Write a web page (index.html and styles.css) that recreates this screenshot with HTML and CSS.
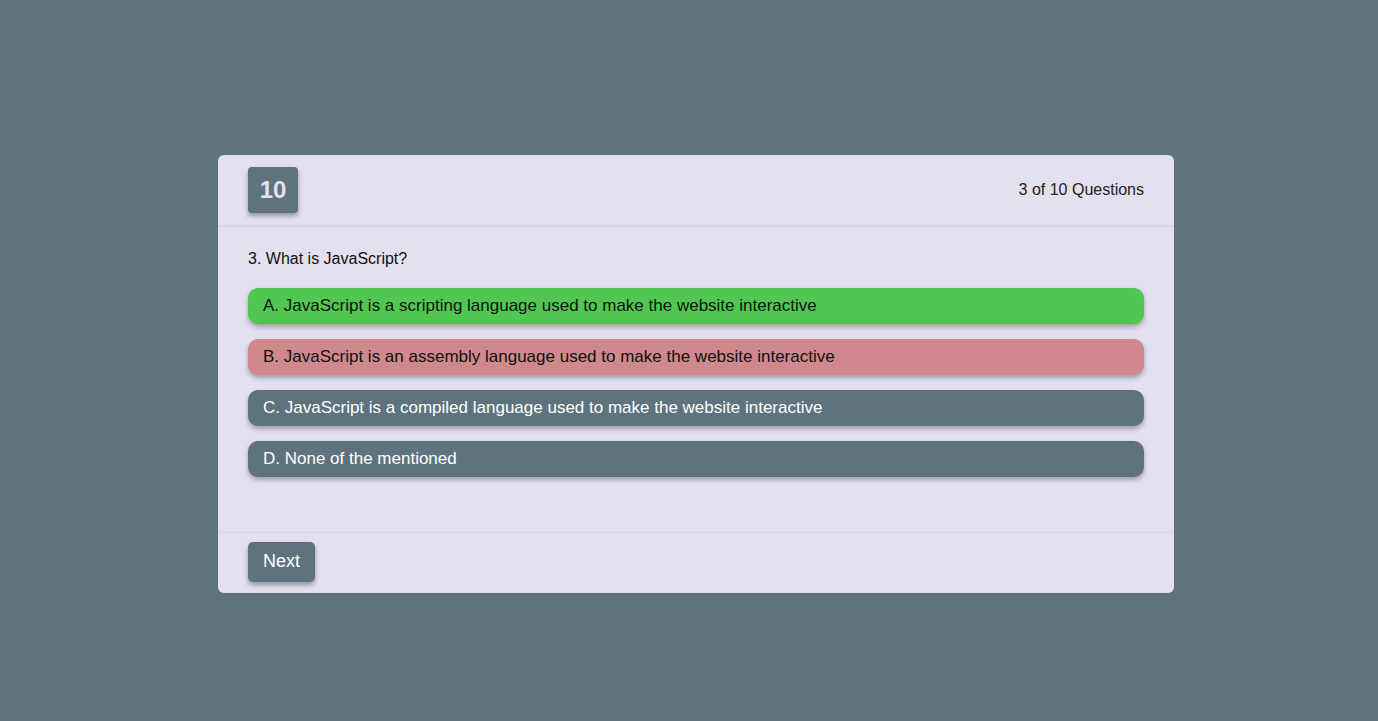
FILE: index.html
```html
<!DOCTYPE html>
<html>
<head>
<meta charset="utf-8">
<link rel="stylesheet" href="styles.css">
</head>
<body>
<div class="page">
  <div class="quiz">
    <div class="quiz-header">
      <div class="timer">10</div>
      <div class="count">3 of 10 Questions</div>
    </div>
    <div class="quiz-body">
      <div class="question">3. What is JavaScript?</div>
      <div class="options">
        <div class="option correct">A. JavaScript is a scripting language used to make the website interactive</div>
        <div class="option wrong">B. JavaScript is an assembly language used to make the website interactive</div>
        <div class="option">C. JavaScript is a compiled language used to make the website interactive</div>
        <div class="option">D. None of the mentioned</div>
      </div>
    </div>
    <div class="quiz-footer">
      <button class="next">Next</button>
    </div>
  </div>
</div>
</body>
</html>
```
FILE: styles.css
```css
* { box-sizing: border-box; }
html, body { margin: 0; height: 100%; }
body {
  background: #5e737d;
  font-family: "Liberation Sans", Arial, sans-serif;
}
.page {
  height: 721px;
  display: flex;
  justify-content: center;
  padding-top: 155px;
  padding-left: 14px;
}
.quiz {
  width: 956px;
  height: 438px;
  background: #e4e0ef;
  border-radius: 6px;
  display: flex;
  flex-direction: column;
}
.quiz-header {
  height: 71px;
  padding: 12px 30px 0;
  display: flex;
  justify-content: space-between;
  align-items: flex-start;
  border-bottom: 1px solid #d9d5e4;
  box-shadow: 0 1px 2px rgba(0,0,0,0.05);
}
.timer {
  width: 50px;
  height: 46px;
  background: #5e737d;
  color: #e4e0ef;
  border-radius: 4px;
  font-size: 24px;
  font-weight: bold;
  display: flex;
  align-items: center;
  justify-content: center;
  box-shadow: 0 3px 5px rgba(0,0,0,0.35);
}
.count {
  font-size: 16px;
  color: #222;
  margin-top: 14px;
}
.quiz-body {
  flex: 1;
  padding: 24px 30px 0;
  border-bottom: 1px solid #d9d5e4;
}
.question {
  font-size: 16px;
  color: #111;
  line-height: 18px;
}
.options {
  margin-top: 20px;
  display: flex;
  flex-direction: column;
  gap: 15px;
}
.option {
  height: 36px;
  border-radius: 10px;
  background: #5e737d;
  color: #fff;
  font-size: 17px;
  padding-left: 15px;
  display: flex;
  align-items: center;
  box-shadow: 0 3px 5px rgba(0,0,0,0.3);
}
.option.correct { background: #50c750; color: #111; }
.option.wrong { background: #cf888c; color: #111; }
.quiz-footer {
  height: 60px;
  padding: 9px 30px 0;
}
.next {
  width: 67px;
  height: 40px;
  border: none;
  border-radius: 5px;
  background: #5e737d;
  color: #fff;
  font-family: "Liberation Sans", Arial, sans-serif;
  font-size: 18px;
  box-shadow: 0 3px 5px rgba(0,0,0,0.35);
  padding: 0 0 2px;
}
```
